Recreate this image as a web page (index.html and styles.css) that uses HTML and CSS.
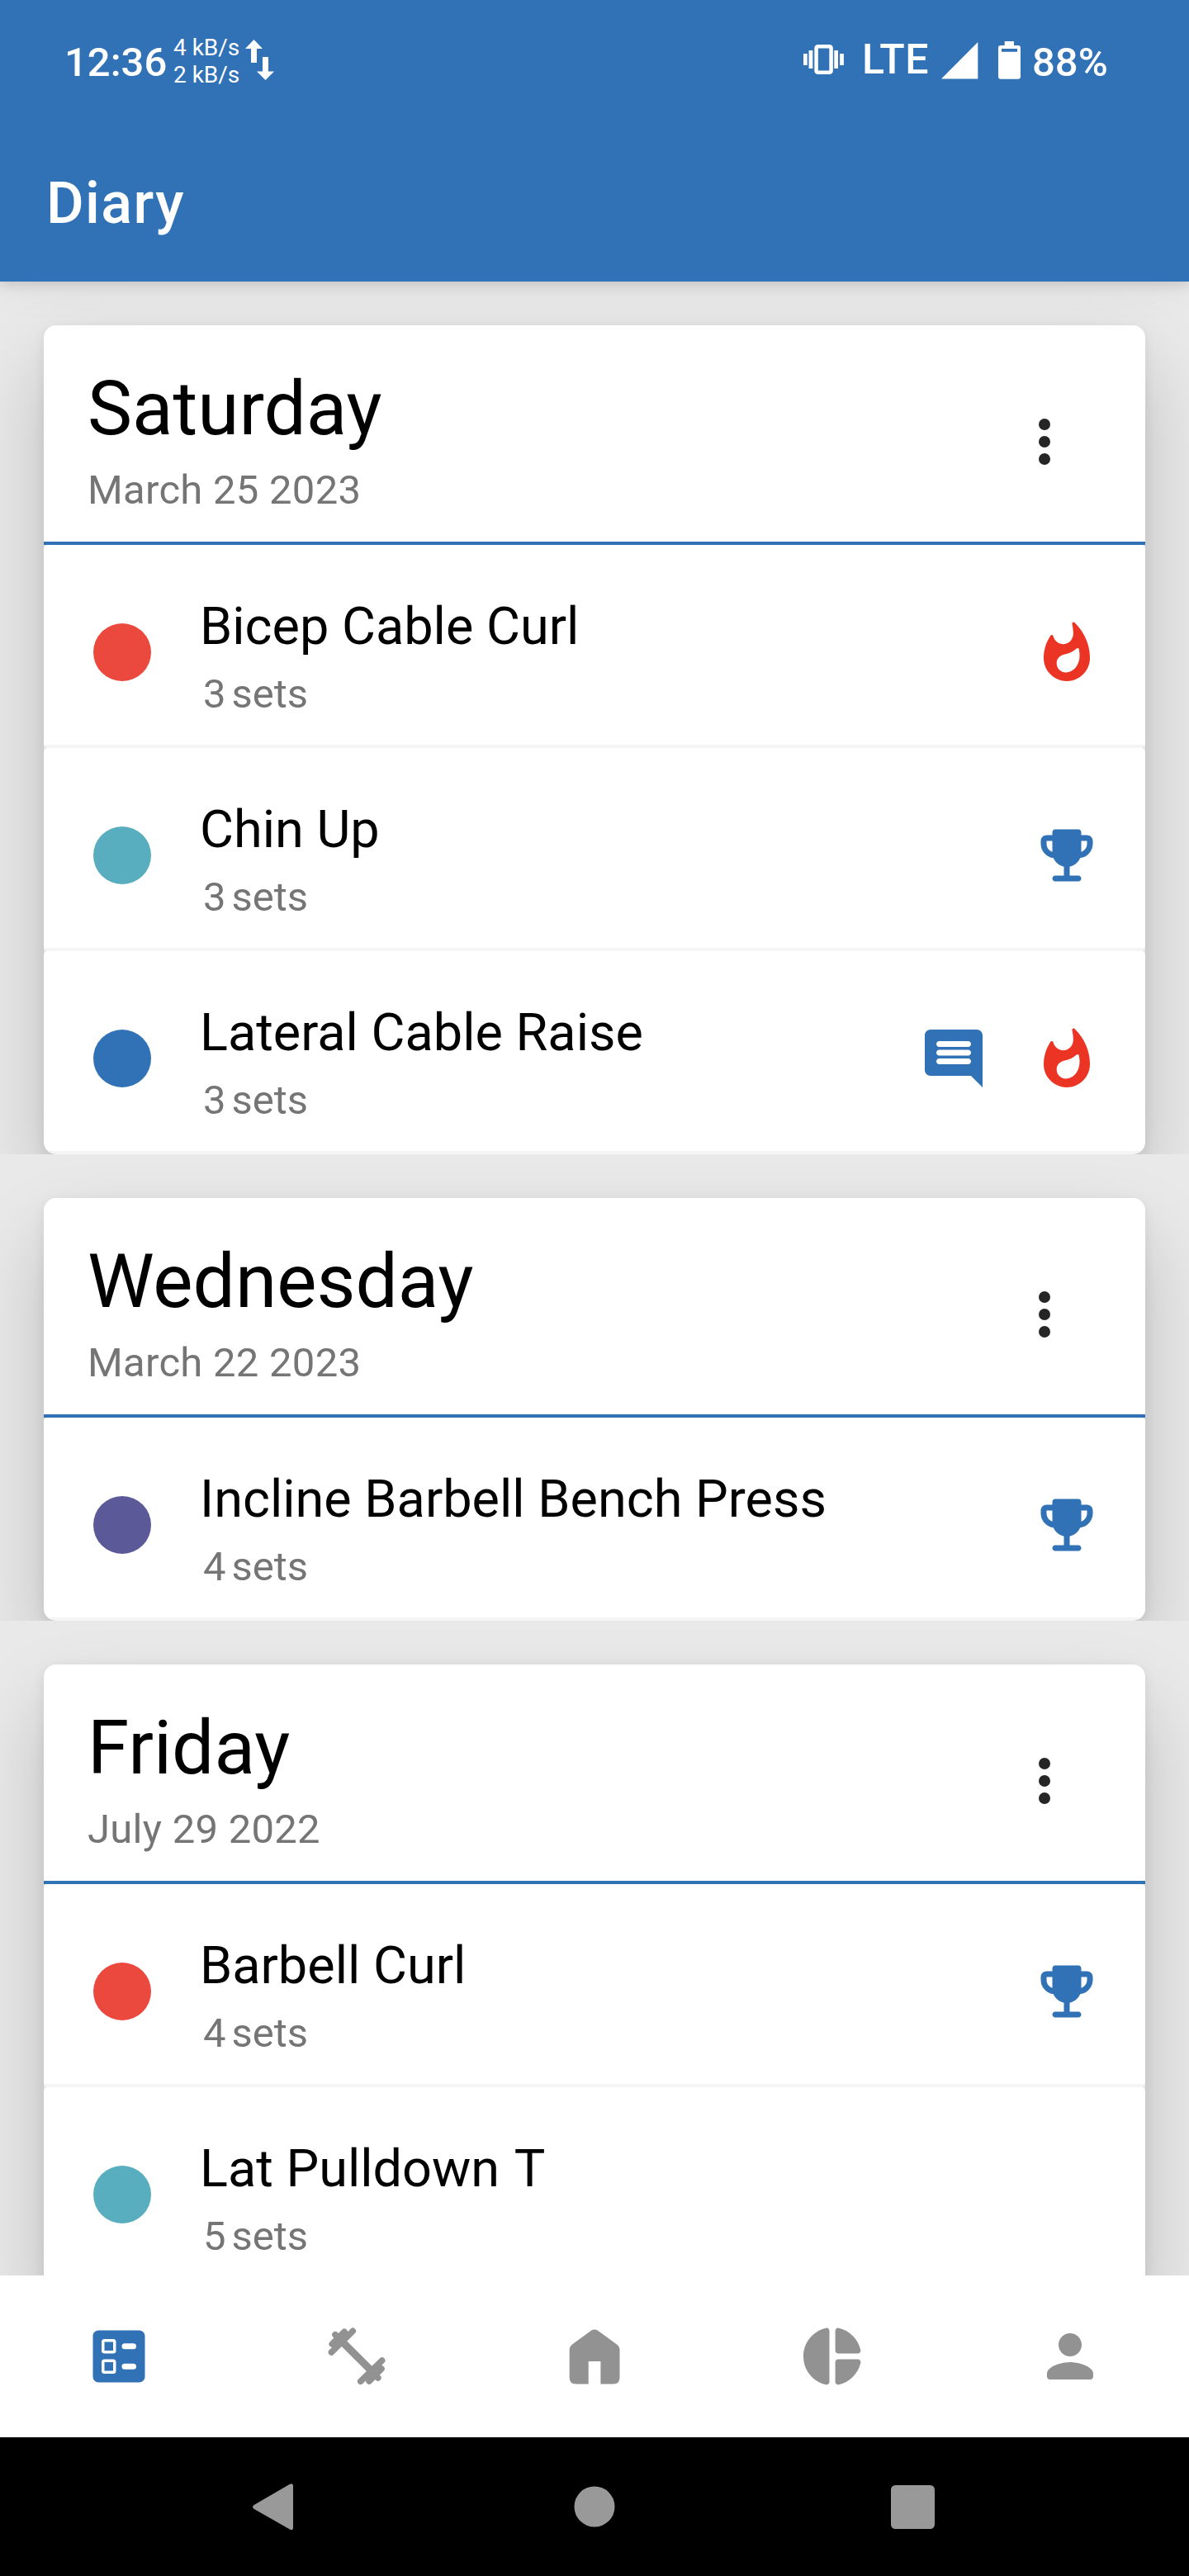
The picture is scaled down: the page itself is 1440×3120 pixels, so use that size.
FILE: index.html
```html
<!DOCTYPE html>
<html lang="en">
<head>
<meta charset="utf-8">
<title>Diary</title>
<link rel="stylesheet" href="styles.css">
</head>
<body>
<svg class="sprite" width="0" height="0">
  <symbol id="i-fire" viewBox="0 0 24 24"><path d="M17.09 4.56c-.7-1.03-1.5-1.99-2.4-2.85-.35-.34-.94-.02-.84.46.19.94.39 2.18.39 3.29 0 2.06-1.35 3.73-3.41 3.73-1.54 0-2.8-.93-3.35-2.26-.1-.2-.14-.32-.2-.54-.11-.42-.66-.55-.9-.18-.18.27-.35.54-.51.83C4.68 9.08 4 11.46 4 14c0 4.42 3.58 8 8 8s8-3.58 8-8c0-3.49-1.08-6.73-2.91-9.44zM11.71 19c-1.78 0-3.22-1.4-3.22-3.14 0-1.62 1.05-2.76 2.81-3.12 1.47-.3 2.98-.92 4.04-2.01.28-.29.79-.19.87.21.15.73.23 1.49.23 2.28.01 3.19-2.08 5.78-4.73 5.78z"/></symbol>
  <symbol id="i-trophy" viewBox="0 0 24 24"><path d="M19 5h-2V4c0-.55-.45-1-1-1H8c-.55 0-1 .45-1 1v1H5c-1.1 0-2 .9-2 2v1c0 2.55 1.92 4.63 4.39 4.94.63 1.5 1.98 2.63 3.61 2.96V19H8c-.55 0-1 .45-1 1s.45 1 1 1h8c.55 0 1-.45 1-1s-.45-1-1-1h-3v-3.1c1.63-.33 2.98-1.46 3.61-2.96C19.08 12.63 21 10.55 21 8V7c0-1.1-.9-2-2-2zM5 8V7h2v3.82C5.84 10.4 5 9.3 5 8zm14 0c0 1.3-.84 2.4-2 2.82V7h2v1z"/></symbol>
  <symbol id="i-comment" viewBox="0 0 24 24"><path d="M22 4c0-1.1-.9-2-2-2H4c-1.1 0-2 .9-2 2v12c0 1.1.9 2 2 2h14l4 4V4zM17 14H7c-.55 0-1-.45-1-1s.45-1 1-1h10c.55 0 1 .45 1 1s-.45 1-1 1zm0-3H7c-.55 0-1-.45-1-1s.45-1 1-1h10c.55 0 1 .45 1 1s-.45 1-1 1zm0-3H7c-.55 0-1-.45-1-1s.45-1 1-1h10c.55 0 1 .45 1 1s-.45 1-1 1z"/></symbol>
  <symbol id="i-more" viewBox="0 0 24 24"><circle cx="12" cy="6" r="2"/><circle cx="12" cy="12" r="2"/><circle cx="12" cy="18" r="2"/></symbol>
</svg>

<header class="top">
  <div class="status">
    <span class="clock">12:36</span>
    <div class="rates"><span>4 kB/s</span><span>2 kB/s</span></div>
    <svg class="arrows" width="36" height="50" viewBox="0 0 36 50"><path d="M10.5 0L21 11H14V28H7V11H0zM21 21h7v17.500h7L24.500 49 14 38.500h7z"/></svg>
    <svg class="vibrate" width="50" height="36" viewBox="0 0 50 36"><rect x="15.600" y="2.300" width="18" height="31.400" rx="2" fill="none" stroke="#fff" stroke-width="4.500"/><path d="M0 11h4.700v14H0zM6.600 7h4.700v22H6.600zM37.300 7H42v22h-4.700zM44.200 11h4.700v14h-4.700z"/></svg>
    <span class="lte">LTE</span>
    <svg class="signal" width="45" height="45" viewBox="0 0 45 45"><path d="M44.300 0V44.500H0z"/></svg>
    <svg class="battery" width="27" height="46" viewBox="0 0 27 46"><path fill-rule="evenodd" d="M7.700 0H19v5h5q3 0 3 3v34.700q0 3-3 3H3q-3 0-3-3V8q0-3 3-3h4.700zM4 9v3.700h19V9z"/></svg>
    <span class="charge">88%</span>
  </div>
  <h1 class="title">Diary</h1>
</header>

<main class="feed">
  <section class="day">
    <article class="card">
      <header class="card-head">
        <div><h2 class="weekday">Saturday</h2><p class="date">March 25 2023</p></div>
        <svg class="icon more"><use href="#i-more"/></svg>
      </header>
      <div class="row">
        <span class="dot red"></span>
        <div class="info"><h3 class="name">Bicep Cable Curl</h3><p class="sets"><span>3</span><span>sets</span></p></div>
        <div class="badges"><svg class="icon fire"><use href="#i-fire"/></svg></div>
      </div>
      <div class="row">
        <span class="dot teal"></span>
        <div class="info"><h3 class="name">Chin Up</h3><p class="sets"><span>3</span><span>sets</span></p></div>
        <div class="badges"><svg class="icon blue"><use href="#i-trophy"/></svg></div>
      </div>
      <div class="row">
        <span class="dot navy"></span>
        <div class="info"><h3 class="name">Lateral Cable Raise</h3><p class="sets"><span>3</span><span>sets</span></p></div>
        <div class="badges"><svg class="icon blue"><use href="#i-comment"/></svg><svg class="icon fire"><use href="#i-fire"/></svg></div>
      </div>
    </article>
  </section>

  <section class="day">
    <article class="card">
      <header class="card-head">
        <div><h2 class="weekday">Wednesday</h2><p class="date">March 22 2023</p></div>
        <svg class="icon more"><use href="#i-more"/></svg>
      </header>
      <div class="row">
        <span class="dot purple"></span>
        <div class="info"><h3 class="name">Incline Barbell Bench Press</h3><p class="sets"><span>4</span><span>sets</span></p></div>
        <div class="badges"><svg class="icon blue"><use href="#i-trophy"/></svg></div>
      </div>
    </article>
  </section>

  <section class="day">
    <article class="card">
      <header class="card-head">
        <div><h2 class="weekday">Friday</h2><p class="date">July 29 2022</p></div>
        <svg class="icon more"><use href="#i-more"/></svg>
      </header>
      <div class="row">
        <span class="dot red"></span>
        <div class="info"><h3 class="name">Barbell Curl</h3><p class="sets"><span>4</span><span>sets</span></p></div>
        <div class="badges"><svg class="icon blue"><use href="#i-trophy"/></svg></div>
      </div>
      <div class="row">
        <span class="dot teal"></span>
        <div class="info"><h3 class="name">Lat Pulldown <span class="loose">T</span></h3><p class="sets"><span>5</span><span>sets</span></p></div>
      </div>
    </article>
  </section>
</main>

<nav class="tabs">
  <svg class="icon blue" viewBox="0 0 24 24"><path fill-rule="evenodd" d="M19 3H5c-1.100 0-2 .9-2 2v14c0 1.100.9 2 2 2h14c1.100 0 2-.9 2-2V5c0-1.100-.9-2-2-2zM7 6h3q1 0 1 1v3q0 1-1 1H7q-1 0-1-1V7q0-1 1-1zM7 13h3q1 0 1 1v3q0 1-1 1H7q-1 0-1-1v-3q0-1 1-1zM14 7.500h3a1 1 0 0 1 0 2h-3a1 1 0 0 1 0-2zM14 14.500h3a1 1 0 0 1 0 2h-3a1 1 0 0 1 0-2z"/><path d="M7 7h3v3H7zM7 14h3v3H7z"/></svg>
  <svg class="icon lines" viewBox="0 0 84 84"><path stroke-width="9" d="M27 26.700L57.300 57"/><path stroke-width="7.500" d="M37.300 11.300L11.400 37M72.700 47L46.700 72.300"/><path stroke-width="8" d="M27 12.600L12.500 27M71.800 57L57.200 71.800"/><path stroke-width="7.600" d="M16 15.700l3 3M67.800 68l-3-3"/></svg>
  <svg class="icon grey" viewBox="0 0 84 84"><path d="M11.700 34q0-4 3.300-6.600L38 10.800q4-2.600 8 0L69 27.400q3.500 2.600 3.500 6.600V67.500q0 8-8 8H49.400V48H34.700V75.500H19.700q-8 0-8-8z"/></svg>
  <svg class="icon grey" viewBox="0 0 24 24"><path d="M11 3.180v17.640c0 .64-.59 1.120-1.210.98C5.320 20.800 2 16.790 2 12s3.320-8.800 7.790-9.800c.62-.14 1.210.34 1.210.98zm2.030 0v6.810c0 .55.45 1 1 1h6.790c.64 0 1.120-.59.98-1.220-.85-3.760-3.800-6.720-7.550-7.570-.63-.14-1.220.34-1.220.98zm0 10.830v6.810c0 .64.59 1.120 1.220.98 3.760-.85 6.710-3.820 7.560-7.580.14-.62-.35-1.220-.98-1.220h-6.790c-.56.01-1.010.46-1.010 1.010z"/></svg>
  <svg class="icon grey" viewBox="0 0 24 24"><path d="M12 12c2.210 0 4-1.790 4-4s-1.790-4-4-4-4 1.790-4 4 1.790 4 4 4zm0 2c-2.670 0-8 1.340-8 4v1c0 .55.45 1 1 1h14c.55 0 1-.45 1-1v-1c0-2.660-5.330-4-8-4z"/></svg>
</nav>

<footer class="sysbar">
  <svg width="50" height="57" viewBox="0 0 50 57"><path d="M45 .8q4-2 4 2.500v50q0 4.500-4 2.200L2 31q-4-2.500 0-5.200z"/></svg>
  <svg width="50" height="50" viewBox="0 0 50 50"><circle cx="25" cy="25" r="24.500"/></svg>
  <svg class="recents" width="53" height="53" viewBox="0 0 53 53"><rect width="53" height="53" rx="5.500"/></svg>
</footer>
</body>
</html>
```
FILE: styles.css
```css
* { box-sizing: border-box; }
body {
  margin: 0;
  width: 1440px;
  height: 3120px;
  display: flex;
  flex-direction: column;
  overflow: hidden;
  background: #fff;
  font-family: Roboto, "Liberation Sans", sans-serif;
  color: #000;
}
h1, h2, h3, p { margin: 0; font-weight: 400; }
svg { display: block; flex: none; }
.sprite { display: none; }

.top {
  height: 341px;
  flex: none;
  background: #3172b7;
  color: #fff;
  fill: #fff;
  position: relative;
  z-index: 1;
  box-shadow: 0 3px 14px rgba(0, 0, 0, .14), 0 6px 50px rgba(0, 0, 0, .06);
}
.status {
  display: flex;
  align-items: flex-start;
  height: 205px;
  padding: 47px 98px 0 78px;
  font-size: 49px;
  line-height: 57px;
  font-weight: 500;
  white-space: nowrap;
}
.clock { width: 132px; }
.rates {
  width: 87px;
  margin-top: -6px;
  display: flex;
  flex-direction: column;
  font-size: 28px;
  line-height: 33px;
  font-weight: 400;
}
.arrows { margin-top: 1px; }
.vibrate { margin: 7px 0 0 auto; }
.lte { margin: -3px 0 0 21px; width: 96px; font-size: 50px; letter-spacing: .4px; }
.signal { margin-top: 4px; }
.battery { margin: 3px 14px 0 24px; }
.charge { width: 92px; }
.title {
  padding-left: 56px;
  font-size: 70px;
  line-height: 82px;
  font-weight: 500;
  letter-spacing: 1.4px;
}

.feed { height: 2415px; flex: none; overflow: hidden; background: #e9e9e9; }
.day { padding: 53px 53px 0; overflow: hidden; background: #e9e9e9; }
.card {
  border-radius: 15px;
  overflow: hidden;
  background: #e6e6e6;
  box-shadow: 0 4px 14px rgba(0, 0, 0, .08), 0 48px 94px rgba(0, 0, 0, .19);
}
.card-head {
  height: 266px;
  padding: 48px 80px 0 53px;
  display: flex;
  justify-content: space-between;
  background: #fff;
  border-bottom: 4px solid #3172b7;
}
.weekday { font-size: 91px; line-height: 106px; }
.date {
  margin-top: 17px;
  font-size: 49px;
  line-height: 57px;
  letter-spacing: .27px;
  color: #757575;
}
.icon { width: 84px; height: 84px; }
.more { margin-top: 51px; fill: #262626; }
.row {
  height: 246px;
  padding: 62px 53px 0 60px;
  display: flex;
  background: #fff;
  border-bottom: 4px solid #f5f5f5;
  border-radius: 5px;
}
.dot { width: 70px; height: 70px; margin-top: 33px; border-radius: 50%; flex: none; }
.red { background: #eb493e; }
.teal { background: #58aebf; }
.navy { background: #3172b7; }
.purple { background: #5b5998; }
.info { flex: 1; margin-left: 59px; }
.name { font-size: 63px; line-height: 73px; }
.loose { margin-left: 2px; }
.sets {
  margin: 17px 0 0 4px;
  display: flex;
  gap: 7px;
  font-size: 49px;
  line-height: 57px;
  color: #757575;
}
.badges { display: flex; gap: 53px; margin-top: 26px; }
.fire { fill: #eb3424; }
.blue { fill: #3172b7; }
.grey { fill: #929292; }
.lines { fill: none; stroke: #929292; stroke-linecap: round; }

.tabs {
  height: 196px;
  flex: none;
  display: grid;
  grid-template-columns: repeat(5, 1fr);
  place-items: center;
  background: #fff;
}
.sysbar {
  height: 168px;
  flex: none;
  display: grid;
  grid-template-columns: 1fr 50px 1fr;
  align-items: center;
  padding: 0 308px 0 306px;
  padding-right: 306px;
  background: #000;
  fill: #999;
}
.recents { justify-self: end; margin-right: 2px; }
```
